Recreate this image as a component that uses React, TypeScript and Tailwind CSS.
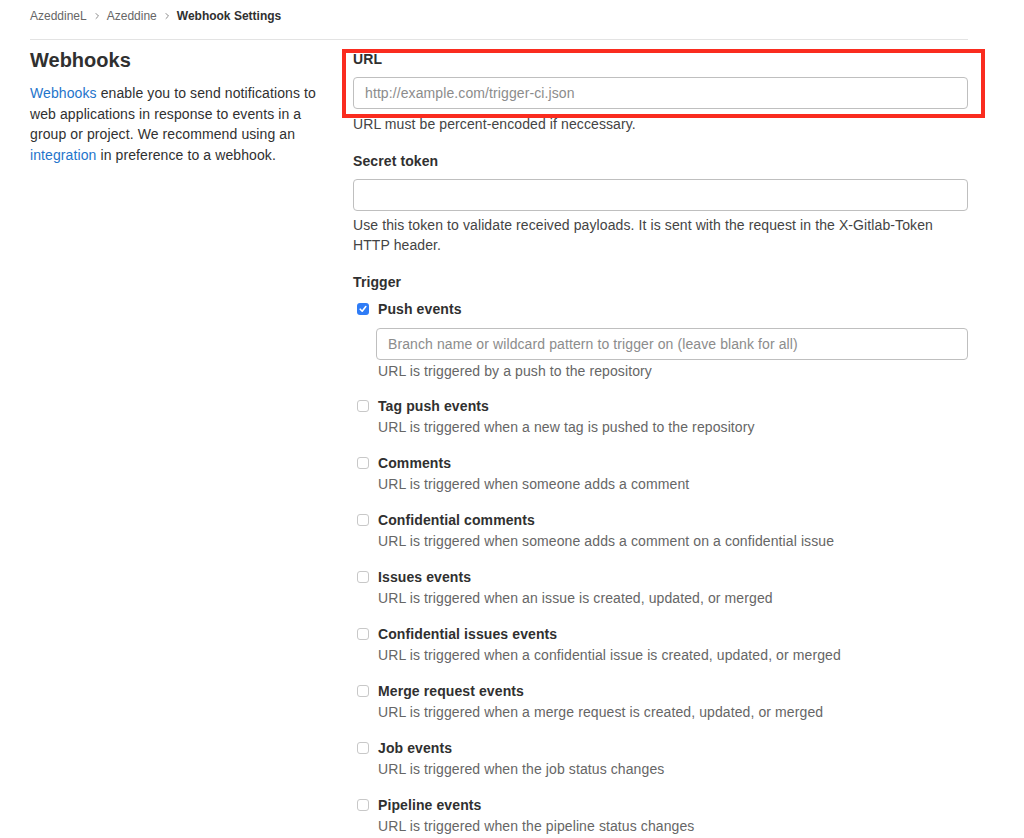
import React from "react";

const font = "font-['Liberation_Sans','Helvetica_Neue',Arial,sans-serif]";

function Chevron() {
  return (
    <svg width="8" height="8" viewBox="0 0 8 8" className="mx-[6px]" aria-hidden>
      <polyline points="3,1.5 5.5,4 3,6.5" fill="none" stroke="#8a8a8a" strokeWidth="1" strokeLinecap="round" strokeLinejoin="round" />
    </svg>
  );
}

function Checkbox({ checked }: { checked?: boolean }) {
  if (checked) {
    return (
      <span className="flex h-[12px] w-[12px] items-center justify-center rounded-[3px] bg-[#2f7cf6]">
        <svg width="10" height="10" viewBox="0 0 10 10" aria-hidden>
          <polyline points="2.2,5.2 4.2,7.2 7.8,2.6" fill="none" stroke="#fff" strokeWidth="1.6" strokeLinecap="round" strokeLinejoin="round" />
        </svg>
      </span>
    );
  }
  return <span className="block h-[12px] w-[12px] rounded-[3px] border border-[#c8c8c8] bg-white" />;
}

const triggers: { label: string; help: string }[] = [
  { label: "Tag push events", help: "URL is triggered when a new tag is pushed to the repository" },
  { label: "Comments", help: "URL is triggered when someone adds a comment" },
  { label: "Confidential comments", help: "URL is triggered when someone adds a comment on a confidential issue" },
  { label: "Issues events", help: "URL is triggered when an issue is created, updated, or merged" },
  { label: "Confidential issues events", help: "URL is triggered when a confidential issue is created, updated, or merged" },
  { label: "Merge request events", help: "URL is triggered when a merge request is created, updated, or merged" },
  { label: "Job events", help: "URL is triggered when the job status changes" },
  { label: "Pipeline events", help: "URL is triggered when the pipeline status changes" },
];

function TriggerRow({ label, help }: { label: string; help: string }) {
  return (
    <div className="flex flex-col">
      <div className="flex h-[20px] items-center">
        <span className="ml-[4px] mr-[9px]">
          <Checkbox />
        </span>
        <span className="text-[14px] font-bold leading-[20px] text-[#303030]">{label}</span>
      </div>
      <p className="ml-[25px] mt-[1px] text-[14px] leading-[20px] text-[#666666]">{help}</p>
    </div>
  );
}

export default function App() {
  return (
    <div className={`h-[838px] w-[1024px] overflow-hidden bg-white tracking-[0.1px] ${font}`}>
      <div className="ml-[30px] w-[938px]">
        <nav className="flex h-[40px] items-start border-b border-[#e3e3e3] pt-[8px] text-[12px] leading-[16px] tracking-normal">
          <span className="text-[#666666]">AzeddineL</span>
          <span className="flex h-[16px] items-center"><Chevron /></span>
          <span className="text-[#666666]">Azeddine</span>
          <span className="flex h-[16px] items-center"><Chevron /></span>
          <span className="font-bold text-[#303030]">Webhook Settings</span>
        </nav>

        <div className="flex">
          <div className="w-[323px] shrink-0 pr-[10px] pt-[8px]">
            <h2 className="text-[20px] font-bold leading-[24px] tracking-normal text-[#303030]">Webhooks</h2>
            <p className="mt-[11px] text-[14px] leading-[20.5px] text-[#303030]">
              <span className="block">
                <a className="text-[#1f75cb]">Webhooks</a> enable you to send notifications to
              </span>
              <span className="block">web applications in response to events in a</span>
              <span className="block">group or project. We recommend using an</span>
              <span className="block">
                <a className="text-[#1f75cb]">integration</a> in preference to a webhook.
              </span>
            </p>
          </div>

          <div className="relative w-[615px] shrink-0 pt-[9px]">
            <div className="pointer-events-none absolute left-[-11px] top-[9px] h-[69px] w-[643px] border-[4px] border-[#fa2c1f]" />

            <label className="block text-[14px] font-bold leading-[20px] text-[#303030]">URL</label>
            <div className="mt-[8px] flex h-[32px] items-center rounded-[4px] border border-[#bfbfbf] px-[11px] text-[14px] text-[#8c8c8c]">
              http://example.com/trigger-ci.json
            </div>
            <p className="mt-[5px] text-[14px] leading-[20px] text-[#444444]">URL must be percent-encoded if neccessary.</p>

            <label className="mt-[17px] block text-[14px] font-bold leading-[20px] text-[#303030]">Secret token</label>
            <div className="mt-[8px] h-[32px] rounded-[4px] border border-[#bfbfbf]" />
            <p className="mt-[4px] text-[14px] leading-[20px] text-[#444444]">
              Use this token to validate received payloads. It is sent with the request in the X-Gitlab-Token
              <br />
              HTTP header.
            </p>

            <label className="mt-[17px] block text-[14px] font-bold leading-[20px] text-[#303030]">Trigger</label>

            <div className="mt-[7px] flex flex-col">
              <div className="flex h-[20px] items-center">
                <span className="ml-[4px] mr-[9px]">
                  <Checkbox checked />
                </span>
                <span className="text-[14px] font-bold leading-[20px] text-[#303030]">Push events</span>
              </div>
              <div className="ml-[23px] mt-[9px] flex h-[32px] items-center rounded-[4px] border border-[#bfbfbf] px-[11px] text-[14px] text-[#8c8c8c]">
                Branch name or wildcard pattern to trigger on (leave blank for all)
              </div>
              <p className="ml-[25px] mt-[1px] text-[14px] leading-[20px] text-[#666666]">URL is triggered by a push to the repository</p>
            </div>

            <div className="mt-[15px] flex flex-col gap-[16px]">
              {triggers.map((t) => (
                <TriggerRow key={t.label} label={t.label} help={t.help} />
              ))}
            </div>
          </div>
        </div>
      </div>
    </div>
  );
}
